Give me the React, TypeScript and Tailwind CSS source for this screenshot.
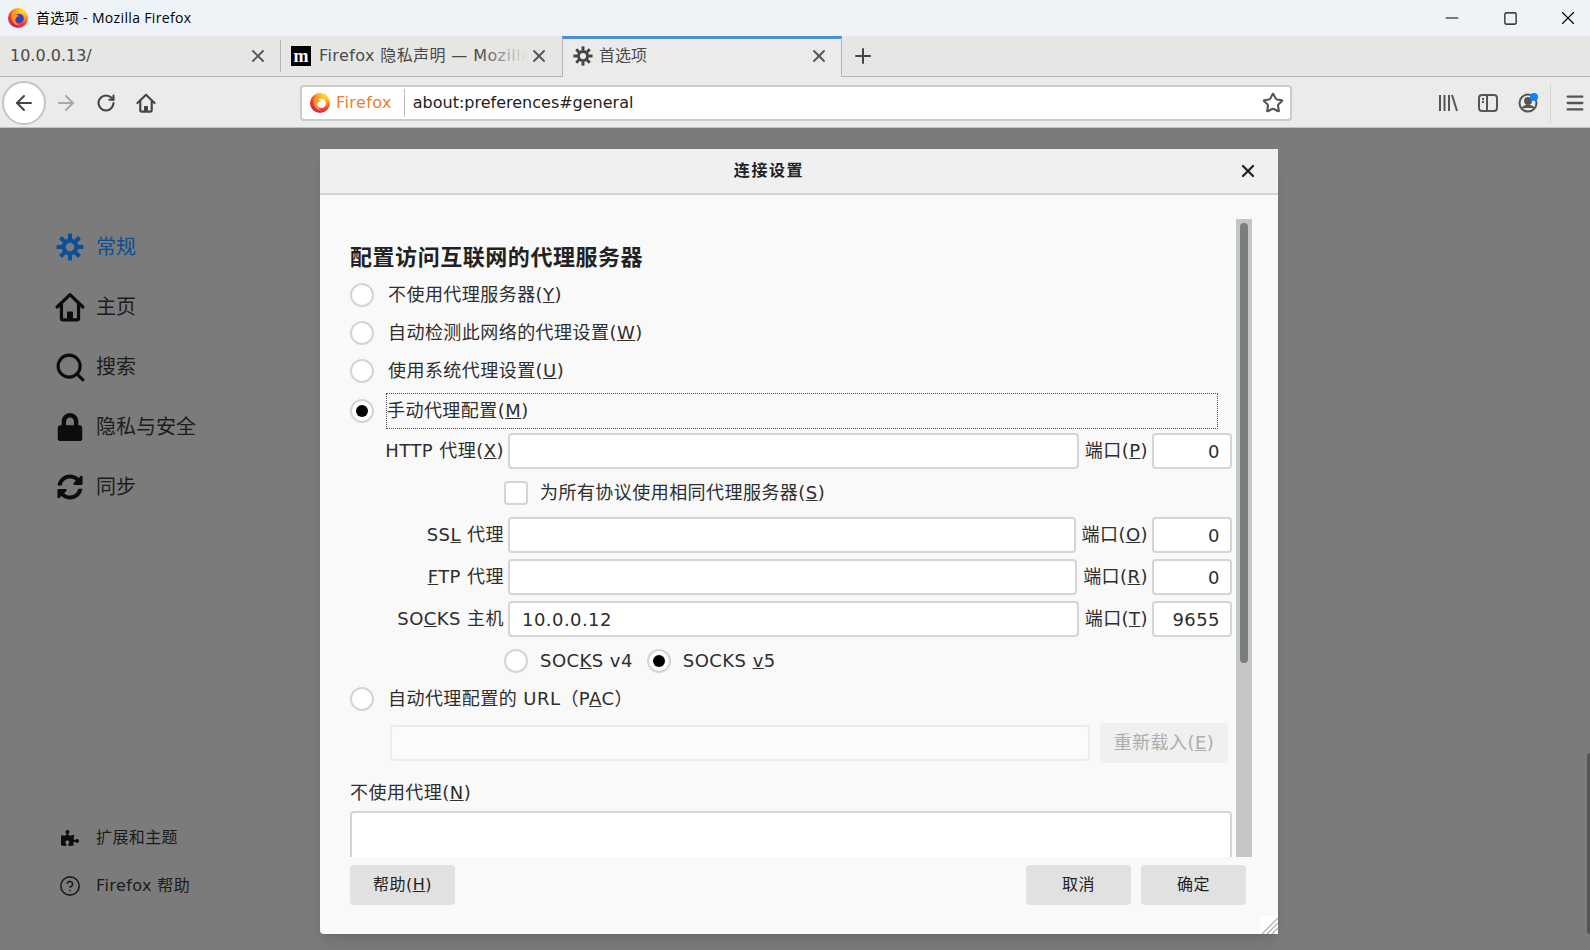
import { ReactNode } from 'react';
import { ArrowLeft, ArrowRight, CircleHelp, Menu, Minus, Plus, RotateCw, Search, Square, Star, X } from 'lucide-react';
import { FaLock, FaPuzzlePiece, FaSyncAlt } from 'react-icons/fa';

function FirefoxLogo({ core }: { core: string }) {
  const id = core.replace('#', 'g');
  return (
    <svg viewBox="0 0 24 24" className="size-5 shrink-0">
      <defs>
        <radialGradient id={id} cx="0.7" cy="0.15" r="1">
          <stop offset="0" stopColor="#ffd83a" />
          <stop offset="0.4" stopColor="#ff9320" />
          <stop offset="0.7" stopColor="#f22c3d" />
          <stop offset="1" stopColor="#a81e8c" />
        </radialGradient>
      </defs>
      <circle cx="12" cy="12" r="12" fill={`url(#${id})`} />
      <circle cx="13.500" cy="12.500" r="5.500" fill={core} />
      <path d="M6 5C2 13 7 22 15 20.500c-5-1-7-4-6-8 1-2 3-3 5-3-2-1-6-1-8-4.500z" fill="#ff9a1f" />
      <path d="M14 .5c5.500 1 9.500 5.500 9.500 11.500-2-4.500-5.500-7.500-10-8z" fill="#ffd42e" />
    </svg>
  );
}

function GearIcon({ size, className }: { size: number; className?: string }) {
  return (
    <svg viewBox="0 0 24 24" width={size} height={size} className={`shrink-0 ${className ?? ''}`} fill="none" stroke="currentColor">
      <circle cx="12" cy="12" r="5.500" strokeWidth="3.500" />
      {[0, 45, 90, 135, 180, 225, 270, 315].map((a) => (
        <path key={a} d="M12 .5v5" strokeWidth="3.500" transform={`rotate(${a} 12 12)`} />
      ))}
    </svg>
  );
}

function HomeIcon({ size, className }: { size: number; className?: string }) {
  return (
    <svg viewBox="0 0 28 28" width={size} height={size} className={`shrink-0 ${className ?? ''}`} fill="none" stroke="currentColor" strokeWidth="3" strokeLinejoin="round" strokeLinecap="round">
      <path d="M2 14 14 2.500 26 14" />
      <path d="M6 11v13.500a1.500 1.500 0 0 0 1.500 1.500h13a1.500 1.500 0 0 0 1.500-1.500V11" />
      <path d="M12 26v-7h4v7z" fill="currentColor" strokeWidth="1.500" />
    </svg>
  );
}

function Radio({ checked = false }: { checked?: boolean }) {
  return (
    <span className="flex size-6 shrink-0 items-center justify-center rounded-full border-2 border-neutral-300 bg-white">
      {checked && <span className="size-3 rounded-full bg-black" />}
    </span>
  );
}

function ProxyRow({ label, portKey, portValue, value = '' }: { label: ReactNode; portKey: string; portValue: string; value?: string }) {
  return (
    <div className="flex h-9 items-center">
      <span className="w-38.5 shrink-0 text-right whitespace-nowrap">{label}</span>
      <input readOnly value={value} className="ml-1 h-9 min-w-0 flex-1 rounded-sm border-2 border-neutral-300 bg-white px-3 outline-none" />
      <span className="mr-1 ml-1.5 shrink-0 whitespace-nowrap">
        端口(<u>{portKey}</u>)
      </span>
      <input readOnly value={portValue} className="h-9 w-20 shrink-0 rounded-sm border-2 border-neutral-300 bg-white px-2.5 text-right outline-none" />
    </div>
  );
}

function SideItem({ icon, label, active = false, small = false }: { icon: ReactNode; label: string; active?: boolean; small?: boolean }) {
  return (
    <div className={`flex items-center gap-3 ${small ? 'h-8 text-base tracking-wide' : 'h-10 text-xl'} ${active ? 'text-[#0a4f97]' : 'text-[#1c1c1c]'}`}>
      <span className="flex w-7 justify-center">{icon}</span>
      <span>{label}</span>
    </div>
  );
}

function Tab({ children, active = false }: { children: ReactNode; active?: boolean }) {
  return (
    <div className={`relative flex w-70 shrink-0 items-center ${active ? '-mb-px border-x border-t-[3px] border-x-[#b4b4b2] border-t-[#4a90d9] bg-[#ebebe9] pb-1' : ''}`}>
      {children}
      <X size={20} strokeWidth={2.25} className="absolute right-3 text-[#555]" />
    </div>
  );
}

export default function App() {
  return (
    <div className="flex h-[950px] w-[1590px] flex-col overflow-hidden bg-[#7b7b7b] font-['DejaVu_Sans','Noto_Sans_CJK_SC',sans-serif] text-[#2e2e2e]">
      {/* window title */}
      <div className="flex h-9 shrink-0 items-center bg-[#eef3f7] pl-2 font-['Open_Sans','Noto_Sans_CJK_SC',sans-serif] text-sm text-black">
        <FirefoxLogo core="#3b3fb5" />
        <span className="ml-2 tracking-wide">首选项 - Mozilla Firefox</span>
        <div className="ml-auto flex items-center gap-3.5">
          <span className="flex w-11 justify-center"><Minus size={20} strokeWidth={1.25} /></span>
          <span className="flex w-11 justify-center"><Square size={15} strokeWidth={1.75} /></span>
          <span className="flex w-11 justify-center"><X size={22} strokeWidth={1.25} /></span>
        </div>
      </div>

      {/* tabs */}
      <div className="flex h-[41px] shrink-0 gap-px border-b border-[#b4b4b2] bg-[#e6e6e4] text-base text-[#4a4a4a]">
        <Tab>
          <span className="pl-2.5">10.0.0.13/</span>
          <span className="absolute top-1 -right-px bottom-1 w-px bg-[#b4b4b2]" />
        </Tab>
        <Tab>
          <span className="ml-2.5 flex size-5 shrink-0 items-center justify-center bg-black font-['Liberation_Serif',serif] text-lg leading-none font-bold text-white">m</span>
          <span className="relative ml-2 w-52 overflow-hidden tracking-wide whitespace-nowrap">
            Firefox 隐私声明 — Mozilla
            <span className="absolute inset-y-0 right-0 w-12 bg-gradient-to-r from-transparent to-[#e6e6e4]" />
          </span>
        </Tab>
        <Tab active>
          <GearIcon size={20} className="ml-2.5 text-[#444]" />
          <span className="ml-1.5">首选项</span>
        </Tab>
        <div className="flex flex-1 items-center pl-2">
          <Plus size={24} strokeWidth={2} className="text-[#444]" />
        </div>
      </div>

      {/* nav bar */}
      <div className="flex h-[51px] shrink-0 items-center border-b border-[#c2c2c2] bg-[#ebebe9] pt-0.5 pl-0.5">
        <span className="flex size-11 items-center justify-center rounded-full border-2 border-[#c4c4c4] bg-white text-[#444]">
          <ArrowLeft size={24} strokeWidth={2} />
        </span>
        <span className="flex w-10 justify-center text-[#a8a8a8]"><ArrowRight size={24} strokeWidth={2} /></span>
        <span className="flex w-10 justify-center text-[#444]"><RotateCw size={20} strokeWidth={2.5} /></span>
        <span className="flex w-10 justify-center text-[#444]"><HomeIcon size={20} /></span>
        <div className="mr-34 ml-33.5 flex h-9 flex-1 items-center rounded border-2 border-[#cbcbcb] bg-white text-base">
          <span className="ml-2 flex items-center gap-1.5 tracking-wide text-[#e8822e]">
            <FirefoxLogo core="#ffffff" />
            Firefox
          </span>
          <span className="mr-2 ml-3 h-7 w-px bg-[#bdbdbd]" />
          <span className="text-[#222]">about:preferences#general</span>
          <Star size={22} strokeWidth={2.25} className="mr-1.5 ml-auto text-[#555]" />
        </div>
        <div className="flex w-[162px] shrink-0 items-center text-[#555]">
          <span className="flex w-10 justify-center">
            <svg viewBox="0 0 20 20" className="size-5" fill="none" stroke="currentColor" strokeWidth="2">
              <path d="M2 2v16M6.500 2v16M11 2v16M14 2l5 16" />
            </svg>
          </span>
          <span className="flex w-10 justify-center">
            <svg viewBox="0 0 20 20" className="size-5" fill="none" stroke="currentColor" strokeWidth="2">
              <rect x="1" y="2" width="18" height="16" rx="3" />
              <path d="M9 2v16M4 6h2M4 9h2" />
            </svg>
          </span>
          <span className="relative flex w-10 justify-center">
            <svg viewBox="0 0 20 20" className="size-5" fill="none" stroke="currentColor" strokeWidth="2">
              <circle cx="10" cy="10" r="8.500" />
              <circle cx="10" cy="8" r="3" fill="currentColor" />
              <path d="M4.500 15c2-3 9-3 11 0" fill="currentColor" />
            </svg>
            <span className="absolute top-0 right-2.5 size-2 rounded-full bg-[#0a84ff]" />
          </span>
          <span className="ml-0.5 h-10 w-px bg-[#d6d6d6]" />
          <span className="flex flex-1 justify-center pl-2"><Menu size={22} strokeWidth={2.5} /></span>
        </div>
      </div>

      {/* page behind the dialog */}
      <div className="relative flex min-h-0 flex-1 flex-col justify-between pt-25 pb-12 pl-14">
        <div className="-mt-px flex flex-col gap-5">
          <SideItem active label="常规" icon={<GearIcon size={28} />} />
          <SideItem label="主页" icon={<HomeIcon size={30} className="text-[#0c0c0c]" />} />
          <SideItem label="搜索" icon={<Search size={33} strokeWidth={2.25} className="shrink-0 text-[#0c0c0c]" />} />
          <SideItem label="隐私与安全" icon={<FaLock size={28} className="text-[#0c0c0c]" />} />
          <SideItem label="同步" icon={<FaSyncAlt size={26} className="text-[#0c0c0c]" />} />
        </div>
        <div className="flex flex-col gap-4">
          <SideItem small label="扩展和主题" icon={<FaPuzzlePiece size={18} className="text-[#0c0c0c]" />} />
          <SideItem small label="Firefox 帮助" icon={<CircleHelp size={22} strokeWidth={1.75} className="text-[#1c1c1c]" />} />
        </div>

        {/* connection settings dialog */}
        <div className="absolute top-[21px] left-80 flex h-[785px] w-[958px] flex-col rounded-sm bg-[#f9f9f9] text-lg tracking-wide shadow-lg">
          <div className="box-content flex h-11 shrink-0 items-center border-b-2 border-[#d4d4d4] bg-[#f0f0f0] text-[#222]">
            <span className="flex-1 text-center text-base font-bold tracking-widest">连接设置</span>
            <span className="flex w-15 justify-center"><X size={20} strokeWidth={2.75} /></span>
          </div>

          <div className="flex min-h-0 flex-1 pt-6 pr-6.5 pl-7.5">
            <div className="flex min-w-0 flex-1 flex-col overflow-hidden pr-1">
              <h2 className="mt-6 flex h-7.5 shrink-0 items-center text-[22px] font-bold tracking-wide text-[#222]">配置访问互联网的代理服务器</h2>
              <div className="mt-1 flex h-9 shrink-0 items-center gap-3.5"><Radio /><span>不使用代理服务器(<u>Y</u>)</span></div>
              <div className="mt-0.5 flex h-9 shrink-0 items-center gap-3.5"><Radio /><span>自动检测此网络的代理设置(<u>W</u>)</span></div>
              <div className="mt-0.5 flex h-9 shrink-0 items-center gap-3.5"><Radio /><span>使用系统代理设置(<u>U</u>)</span></div>
              <div className="mt-1 flex h-9 shrink-0 items-center gap-3">
                <Radio checked />
                <span className="mr-3.5 flex h-9 flex-1 items-center border border-dotted border-neutral-600">手动代理配置(<u>M</u>)</span>
              </div>

              <div className="mt-1 shrink-0">
                <ProxyRow label={<>HTTP 代理(<u>X</u>)</>} portKey="P" portValue="0" />
              </div>
              <div className="mt-3 flex h-6 shrink-0 items-center gap-3 pl-38.5">
                <span className="size-6 shrink-0 rounded-sm border-2 border-neutral-300 bg-white" />
                <span>为所有协议使用相同代理服务器(<u>S</u>)</span>
              </div>
              <div className="mt-3 shrink-0">
                <ProxyRow label={<>SS<u>L</u> 代理</>} portKey="O" portValue="0" />
              </div>
              <div className="mt-1.5 shrink-0">
                <ProxyRow label={<><u>F</u>TP 代理</>} portKey="R" portValue="0" />
              </div>
              <div className="mt-1.5 shrink-0">
                <ProxyRow label={<>SO<u>C</u>KS 主机</>} portKey="T" portValue="9655" value="10.0.0.12" />
              </div>
              <div className="mt-3 flex h-6 shrink-0 items-center pl-38.5">
                <Radio />
                <span className="ml-3">SOC<u>K</u>S v4</span>
                <span className="ml-3.5"><Radio checked /></span>
                <span className="ml-3">SOCKS <u>v</u>5</span>
              </div>
              <div className="mt-3.5 flex h-6 shrink-0 items-center gap-3.5"><Radio /><span>自动代理配置的 URL（P<u>A</u>C）</span></div>

              <div className="mt-3 ml-10 flex h-10 shrink-0 items-center gap-2.5 pr-1">
                <span className="h-9 flex-1 rounded-sm border-2 border-[#ececec] bg-[#fbfbfb]" />
                <span className="flex h-10 w-32 items-center justify-center rounded-sm bg-[#f0f0f0] text-[#adadad]">重新载入(<u>E</u>)</span>
              </div>
              <div className="mt-4 flex h-7 shrink-0 items-center">不使用代理(<u>N</u>)</div>
              <div className="mt-1 h-24 shrink-0 rounded-sm border-2 border-neutral-300 bg-white" />
            </div>
            <div className="w-4 shrink-0 bg-[#c4c6c5] pt-1">
              <div className="mx-1 h-110 rounded-full bg-[#7a7f7e]" />
            </div>
          </div>

          <div className="flex h-[77px] shrink-0 items-start justify-between pt-2 pr-8 pl-7.5 text-base text-[#222]">
            <span className="flex h-10 w-[105px] items-center justify-center rounded-sm bg-[#e1e1e1]">帮助(<u>H</u>)</span>
            <div className="flex gap-2.5">
              <span className="flex h-10 w-[105px] items-center justify-center rounded-sm bg-[#e1e1e1]">取消</span>
              <span className="flex h-10 w-[105px] items-center justify-center rounded-sm bg-[#e1e1e1]">确定</span>
            </div>
          </div>

          <svg viewBox="0 0 18 18" className="absolute right-0 bottom-0 size-[18px] bg-white" fill="none" stroke="#b8b8b8" strokeWidth="1.5">
            <path d="M18 2 2 18M18 7 7 18M18 12 12 18" />
          </svg>
        </div>

        {/* page scrollbar peeking out on the right */}
        <div className="absolute top-[625px] right-0 bottom-4 w-[3px] rounded-l-sm bg-[#555]" />
      </div>
    </div>
  );
}
